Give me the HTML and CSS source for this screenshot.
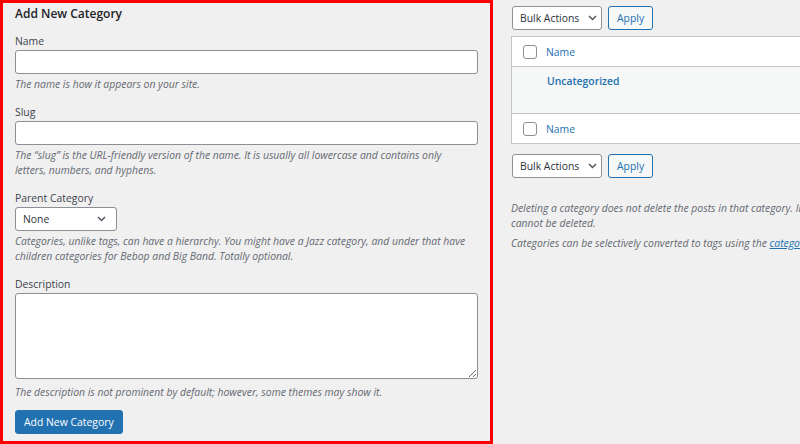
FILE: index.html
```html
<!DOCTYPE html>
<html lang="en">
<head>
    <meta charset="UTF-8">
    <meta name="viewport" content="width=device-width, initial-scale=1.0">
    <title>Categories</title>
    <link rel="stylesheet" href="styles.css">
</head>
<body>
    <div class="page">
        <div class="col-left">
            <div class="form-wrap">
                <h2 class="title">Add New Category</h2>
                <form id="addtag">
                    <div class="form-field">
                        <label for="tag-name">Name</label>
                        <input type="text" id="tag-name" class="text-input">
                        <p class="hint">The name is how it appears on your site.</p>
                    </div>

                    <div class="form-field">
                        <label for="tag-slug">Slug</label>
                        <input type="text" id="tag-slug" class="text-input">
                        <p class="hint">The &ldquo;slug&rdquo; is the URL-friendly version of the name. It is usually all lowercase and contains only letters, numbers, and hyphens.</p>
                    </div>

                    <div class="form-field">
                        <label>Parent Category</label>
                        <div class="select select-parent">
                            <span>None</span>
                            <svg width="9" height="6" viewBox="0 0 9 6"><path d="M1 1l3.5 3.5L8 1" fill="none" stroke="#50575e" stroke-width="1.5"/></svg>
                        </div>
                        <p class="hint">Categories, unlike tags, can have a hierarchy. You might have a Jazz category, and under that have children categories for Bebop and Big Band. Totally optional.</p>
                    </div>

                    <div class="form-field">
                        <label for="tag-description">Description</label>
                        <textarea id="tag-description" class="textarea"></textarea>
                        <p class="hint hint-desc">The description is not prominent by default; however, some themes may show it.</p>
                    </div>

                    <button type="button" class="button-primary">Add New Category</button>
                </form>
            </div>
        </div>

        <div class="col-right">
            <div class="tablenav">
                <div class="select select-bulk">
                    <span>Bulk Actions</span>
                    <svg width="9" height="6" viewBox="0 0 9 6"><path d="M1 1l3.5 3.5L8 1" fill="none" stroke="#50575e" stroke-width="1.5"/></svg>
                </div>
                <button type="button" class="button">Apply</button>
            </div>

            <table class="list-table">
                <thead>
                    <tr>
                        <td class="check-col"><span class="checkbox"></span></td>
                        <th><a href="#">Name</a></th>
                    </tr>
                </thead>
                <tbody>
                    <tr class="alt">
                        <td class="check-col"></td>
                        <td class="row-title"><a href="#">Uncategorized</a></td>
                    </tr>
                </tbody>
                <tfoot>
                    <tr>
                        <td class="check-col"><span class="checkbox"></span></td>
                        <th><a href="#">Name</a></th>
                    </tr>
                </tfoot>
            </table>

            <div class="tablenav tablenav-bottom">
                <div class="select select-bulk">
                    <span>Bulk Actions</span>
                    <svg width="9" height="6" viewBox="0 0 9 6"><path d="M1 1l3.5 3.5L8 1" fill="none" stroke="#50575e" stroke-width="1.5"/></svg>
                </div>
                <button type="button" class="button">Apply</button>
            </div>

            <div class="notes">
                <p>Deleting a category does not delete the posts in that category. Instead, posts that were only assigned to the deleted category are set to the default category <strong>Uncategorized</strong>. The default category<br>cannot be deleted.</p>
                <p>Categories can be selectively converted to tags using the <a href="#">category to tag converter</a>.</p>
            </div>
        </div>
    </div>
</body>
</html>
```

FILE: styles.css
```css
html, body {
    margin: 0;
    padding: 0;
    background-color: #f0f0f1;
    overflow: hidden;
}
body {
    font-family: 'Open Sans', 'Noto Sans', sans-serif;
    font-size: 10.4px;
    color: #3c434a;
    width: 800px;
    height: 444px;
}
.page {
    display: flex;
    align-items: flex-start;
}
.col-left {
    flex: 0 0 493px;
}
.form-wrap {
    box-sizing: border-box;
    width: 493px;
    height: 444px;
    border: 3px solid #ff0000;
    padding: 3px 12px 0 12px;
}
.title {
    margin: 0;
    font-size: 12px;
    line-height: 15px;
    font-weight: 600;
    color: #1d2327;
}
.form-field {
    margin-top: 13px;
}
.form-field label {
    display: block;
    line-height: 14px;
    margin-bottom: 2px;
}
.text-input {
    display: block;
    box-sizing: border-box;
    width: 463px;
    height: 24px;
    margin: 0;
    border: 1px solid #8c8f94;
    border-radius: 3px;
    background: #fff;
}
.textarea {
    display: block;
    box-sizing: border-box;
    width: 463px;
    height: 86px;
    margin: 0;
    border: 1px solid #8c8f94;
    border-radius: 3px;
    background: #fff;
}
.hint {
    max-width: 456px;
    margin: 3px 0 0 0;
    font-style: italic;
    color: #646970;
    line-height: 15px;
}
.hint-desc {
    margin-top: 6px;
}
.select {
    box-sizing: border-box;
    height: 24px;
    display: flex;
    align-items: center;
    justify-content: space-between;
    border: 1px solid #8c8f94;
    border-radius: 3px;
    background: #fff;
    color: #2c3338;
}
.select-parent {
    width: 102px;
    padding: 0 10px 0 7px;
}
.select-bulk {
    width: 90px;
    padding: 0 4px 0 7px;
}
.button-primary {
    display: block;
    margin-top: 10px;
    height: 24px;
    padding: 0 8px;
    border: 1px solid #2271b1;
    border-radius: 3px;
    background: #2271b1;
    color: #fff;
    font-family: inherit;
    font-size: 10.4px;
}
.col-right {
    flex: 0 0 900px;
    margin-left: 18px;
}
.tablenav {
    display: flex;
    gap: 6px;
    padding-top: 6px;
    padding-left: 1px;
}
.button {
    box-sizing: border-box;
    height: 24px;
    padding: 0 8px;
    border: 1px solid #2271b1;
    border-radius: 3px;
    background: #f6f7f7;
    color: #2271b1;
    font-family: inherit;
    font-size: 10.4px;
}
.list-table {
    width: 100%;
    margin-top: 6px;
    border-collapse: collapse;
    border: 1px solid #c3c4c7;
    background: #fff;
}
.list-table td, .list-table th {
    text-align: left;
    font-weight: normal;
    vertical-align: middle;
    padding: 0;
}
.list-table thead tr, .list-table tfoot tr {
    height: 30px;
}
.list-table thead tr {
    border-bottom: 1px solid #c3c4c7;
}
.list-table tfoot tr {
    border-top: 1px solid #c3c4c7;
}
.list-table a {
    color: #2271b1;
    text-decoration: none;
}
.check-col {
    width: 23px;
    padding-left: 11px !important;
}
.checkbox {
    display: block;
    box-sizing: border-box;
    width: 14px;
    height: 14px;
    border: 1px solid #8c8f94;
    border-radius: 3px;
    background: #fff;
}
.alt {
    background: #f6f7f7;
    height: 47px;
}
.row-title {
    vertical-align: top !important;
    padding-top: 7px !important;
    padding-left: 1px !important;
}
.row-title a {
    font-weight: 600;
}
.tablenav-bottom {
    padding-top: 10px;
}
.notes {
    margin-top: 23px;
}
.notes p {
    margin: 0 0 5px 0;
    font-style: italic;
    color: #646970;
    line-height: 15px;
    white-space: nowrap;
}
.notes strong {
    font-weight: normal;
}
.notes a {
    color: #2271b1;
}
```
